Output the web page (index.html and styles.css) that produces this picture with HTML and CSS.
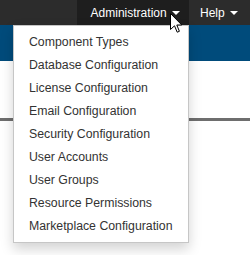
FILE: index.html
```html
<!DOCTYPE html>
<html>
<head>
<meta charset="utf-8">
<link rel="stylesheet" href="styles.css">
</head>
<body>
<header class="navbar">
  <ul class="nav">
    <li class="nav-item active">
      <a class="nav-link">Administration <span class="caret"></span></a>
      <ul class="dropdown">
        <li><a>Component Types</a></li>
        <li><a>Database Configuration</a></li>
        <li><a>License Configuration</a></li>
        <li><a>Email Configuration</a></li>
        <li><a>Security Configuration</a></li>
        <li><a>User Accounts</a></li>
        <li><a>User Groups</a></li>
        <li><a>Resource Permissions</a></li>
        <li><a>Marketplace Configuration</a></li>
      </ul>
      <svg class="cursor" width="13" height="21" viewBox="0 0 13 21"><path d="M0.5 0.5 L0.5 16.5 L4.5 12.8 L7.2 19.2 L9.4 18.3 L6.8 12 L11.8 12 Z" fill="#fff" stroke="#000" stroke-width="1" stroke-linejoin="miter"/></svg>
    </li>
    <li class="nav-item help">
      <a class="nav-link">Help <span class="caret"></span></a>
    </li>
  </ul>
</header>
<div class="band"></div>
<div class="content">
  <div class="rule"></div>
</div>
</body>
</html>
```
FILE: styles.css
```css
html, body {
  margin: 0;
  padding: 0;
  background: #fff;
  font-family: "Liberation Sans", Arial, sans-serif;
}
body {
  min-height: 255px;
}
.navbar {
  height: 25px;
  background: #2c2c2c;
  display: flex;
  justify-content: flex-end;
}
.nav {
  list-style: none;
  margin: 0;
  padding: 0;
  display: flex;
}
.nav-item {
  position: relative;
}
.nav-link {
  display: flex;
  align-items: center;
  height: 25px;
  color: #fff;
  font-size: 12px;
  white-space: pre;
}
.active .nav-link {
  background: #1e1e1e;
  padding: 0 9px 0 14px;
}
.help .nav-link {
  padding: 0 12px 0 11px;
}
.caret {
  display: inline-block;
  width: 0;
  height: 0;
  margin-left: 2px;
  border-top: 4px solid #fff;
  border-left: 4px solid transparent;
  border-right: 4px solid transparent;
}
.dropdown {
  position: absolute;
  top: 25px;
  right: 0;
  z-index: 10;
  list-style: none;
  margin: 0;
  padding: 5px 0 4px;
  width: 174px;
  background: #fff;
  border: 1px solid #c6c6c6;
  box-shadow: 0 6px 12px rgba(0, 0, 0, 0.175);
}
.dropdown a {
  display: block;
  padding: 3px 15px;
  line-height: 17px;
  font-size: 12.3px;
  color: #333;
  white-space: nowrap;
}
.cursor {
  position: absolute;
  left: 93px;
  top: 13px;
  z-index: 20;
}
.band {
  height: 36px;
  background: #004b7b;
}
.content {
  padding-top: 57px;
}
.rule {
  height: 3px;
  background: #6e6e6e;
}
```
